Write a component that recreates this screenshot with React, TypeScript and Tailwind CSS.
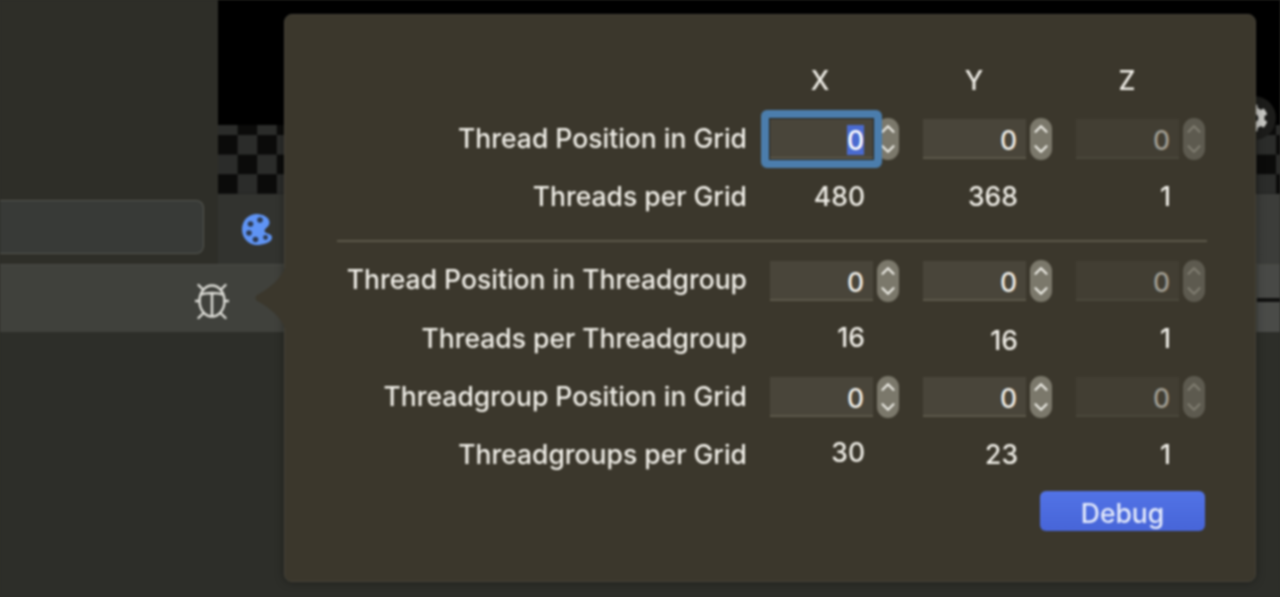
import { ChevronDown, ChevronUp } from "lucide-react";
import { FaCog } from "react-icons/fa";

function PaletteIcon() {
  return (
    <svg width="32" height="33" viewBox="0 0 32 33" className="ml-[23px] mt-[19px]">
      <path
        d="M16 1C7 1 1 8 1 16.500C1 25 7.500 32 16 32C21 32 31 30 31 24.500C31 20 24 21 23.500 18C23.500 15 28.500 14 28.500 9.500C28.500 4.500 22 1 16 1Z"
        fill="#5f94f5"
      />
      <circle cx="9.500" cy="11" r="2.800" fill="#2d3a50" />
      <circle cx="19" cy="7" r="2.800" fill="#2d3a50" />
      <circle cx="8" cy="20" r="2.800" fill="#2d3a50" />
      <circle cx="14.500" cy="26.500" r="2.800" fill="#2d3a50" />
      <circle cx="24.500" cy="24.500" r="2.400" fill="#2d3a50" />
    </svg>
  );
}

function BugIcon() {
  return (
    <svg width="34" height="38" viewBox="0 0 34 38" fill="none" stroke="#dcdcd6" strokeWidth="2.400">
      <ellipse cx="17" cy="19" rx="12.500" ry="15.500" />
      <path d="M5.500 12.500Q17 9.500 28.500 12.500M17 11V34" />
      <path d="M3.500 3L8 7.500M30.500 3L26 7.500M0.500 19H4.500M33.500 19H29.500M3.500 36L8 31.500M30.500 36L26 31.500" strokeLinecap="round" />
    </svg>
  );
}

function Stepper({ disabled }: { disabled?: boolean }) {
  const bg = disabled ? "bg-[#5d5a4f]" : "bg-[#7b786b]";
  const arrow = disabled ? "text-[#7f7c70]" : "text-[#ecebe4]";
  return (
    <div className={`w-[22px] h-[42px] rounded-full flex flex-col items-center justify-center ${bg} ${arrow}`}>
      <ChevronUp size={22} strokeWidth={2.4} className="shrink-0 -my-[1px]" />
      <ChevronDown size={22} strokeWidth={2.4} className="shrink-0 -my-[1px]" />
    </div>
  );
}

function Field({ disabled, focused }: { disabled?: boolean; focused?: boolean }) {
  return (
    <div className="relative flex items-center gap-[4px] h-[44px]">
      <div
        className={`w-[103px] h-[40px] flex items-center justify-end pr-[9px] pt-[3px] border-b-2 ${
          disabled ? "bg-[#423e33] border-[#4a473b] text-[#a09d92]" : "bg-[#49453a] border-[#5c584a] text-[#efede6]"
        }`}
      >
        {focused ? <span className="bg-[#4a6bd0] text-white leading-[30px]">0</span> : "0"}
      </div>
      <Stepper disabled={disabled} />
      {focused && (
        <div className="absolute -left-[9px] -top-[7px] w-[121px] h-[58px] rounded-md border-[8px] border-[#4b7dac] outline outline-[#24231d] -outline-offset-[9px]" />
      )}
    </div>
  );
}

function Row({
  label,
  children,
  className,
  labelClassName,
}: {
  label: string;
  children: React.ReactNode;
  className: string;
  labelClassName?: string;
}) {
  return (
    <div className={`flex items-center gap-[23px] ${className}`}>
      <div className={`w-[410px] text-right whitespace-nowrap ${labelClassName ?? ""}`}>{label}</div>
      <div className="flex items-center gap-[24px]">{children}</div>
    </div>
  );
}

function Value({ children, className }: { children: React.ReactNode; className?: string }) {
  return <div className={`w-[129px] pr-[34px] text-right ${className ?? ""}`}>{children}</div>;
}

function Fields({ focused }: { focused?: boolean }) {
  return (
    <>
      <div className="w-[129px]">
        <Field focused={focused} />
      </div>
      <div className="w-[129px]">
        <Field />
      </div>
      <div className="w-[129px]">
        <Field disabled />
      </div>
    </>
  );
}

export default function App() {
  return (
    <div className="w-[1280px] h-[597px] overflow-hidden bg-[#2d2e29]">
      <div className="relative w-full h-full flex flex-col blur-[0.8px] font-['Inter',sans-serif]">
        {/* Background editor */}
        <div className="flex h-[264px]">
          <div className="w-[218px] bg-[#2e2e28] flex flex-col justify-end pb-[10px] pr-[14px]">
            <div className="h-[54px] rounded-r-lg border border-l-0 border-[#555650] bg-[#383a37]" />
          </div>
          <div className="flex-1 flex flex-col">
            <div className="h-[125px] bg-black" />
            <div className="h-[69px] bg-[conic-gradient(#2b2c2a_25%,#0b0b0a_0_50%,#2b2c2a_0_75%,#0b0b0a_0)] bg-[length:39.2px_39.2px] bg-[position:0px_10px]" />
            <div className="h-[70px] bg-[linear-gradient(90deg,#32332f,#3c3d3a)]">
              <PaletteIcon />
            </div>
          </div>
        </div>

        <div className="h-[68px] bg-[#40413c] border-t border-[#484944] flex">
          <div className="pl-[195px] pt-[17px]">
            <BugIcon />
          </div>
          <div className="ml-auto w-[23px] flex flex-col">
            <div className="h-[33px] bg-[#484946]" />
            <div className="h-[4px] bg-[#111110]" />
            <div className="flex-1 bg-[#4a4b48]" />
          </div>
        </div>

        <div className="flex-1 bg-[#2d2e29]" />

        {/* Gizmo peeking out behind the popover */}
        <div className="absolute left-[1232px] top-[96px] w-[44px] h-[44px] rounded-full bg-[#1c1c1a] flex items-center justify-center">
          <FaCog size={28} className="text-[#c8c8c4]" />
        </div>

        {/* Popover */}
        <div className="absolute left-[284px] top-[14px] w-[972px] h-[568px] rounded-lg bg-[#3b372c] border border-[#454238] shadow-[0_0_10px_rgba(0,0,0,0.35)] pl-[52px] pt-[49px] text-[26.5px] leading-[32px] font-medium text-[#efede6]">
          <svg width="31" height="70" viewBox="0 0 31 70" className="absolute -left-[30px] top-[248px]">
            <path d="M31 0C29 14 15 25 1.500 32.500C0 34 0 36 1.500 37.500C15 45 29 56 31 70Z" fill="#3b372c" />
          </svg>

          <div className="flex pl-[433px] gap-[24px] text-center">
            <div className="w-[129px] pr-[29px]">X</div>
            <div className="w-[129px] pr-[27px]">Y</div>
            <div className="w-[129px] pr-[27px]">Z</div>
          </div>

          <Row label="Thread Position in Grid" className="mt-[21px]" labelClassName="-translate-y-[1px]">
            <Fields focused />
          </Row>
          <Row label="Threads per Grid" className="mt-[19px]">
            <Value>480</Value>
            <Value>368</Value>
            <Value>1</Value>
          </Row>

          <div className="mt-[28px] w-[870px] h-[2px] bg-[#5c5849]" />

          <Row label="Thread Position in Threadgroup" className="mt-[17px]" labelClassName="-translate-y-[2px]">
            <Fields />
          </Row>
          <Row label="Threads per Threadgroup" className="mt-[19px]">
            <Value className="-translate-y-[1px]">16</Value>
            <Value className="translate-y-[2px]">16</Value>
            <Value>1</Value>
          </Row>
          <Row label="Threadgroup Position in Grid" className="mt-[21px]" labelClassName="-translate-y-[1px]">
            <Fields />
          </Row>
          <Row label="Threadgroups per Grid" className="mt-[19px]">
            <Value className="-translate-y-[2px]">30</Value>
            <Value>23</Value>
            <Value>1</Value>
          </Row>

          <div className="mt-[21px] pl-[703px]">
            <button className="w-[165px] h-[40px] pt-[3px] rounded-md bg-[linear-gradient(180deg,#5273e6,#4765d8)] text-[#e4eafb]">
              Debug
            </button>
          </div>
        </div>
      </div>
    </div>
  );
}
